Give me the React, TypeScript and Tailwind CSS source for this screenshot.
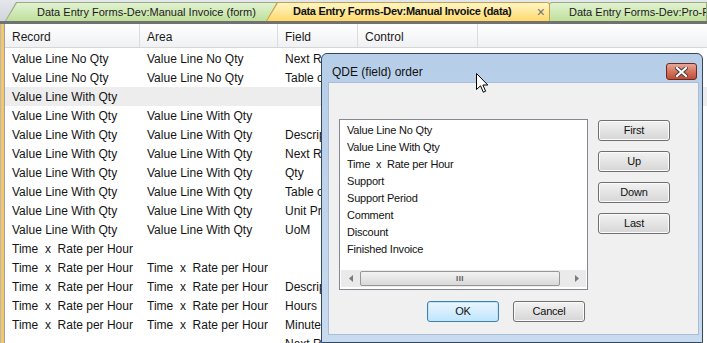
const font = "font-['Liberation_Sans',Arial,sans-serif]"

const VL = "Value Line No Qty"
const VW = "Value Line With Qty"
const TR = "Time  x  Rate per Hour"

const rows: [string, string, string][] = [
    [VL, VL, "Next Record"],
    [VL, VL, "Table of Values"],
    [VW, "", ""],
    [VW, VW, ""],
    [VW, VW, "Description"],
    [VW, VW, "Next Record"],
    [VW, VW, "Qty"],
    [VW, VW, "Table of Values"],
    [VW, VW, "Unit Price"],
    [VW, VW, "UoM"],
    [TR, "", ""],
    [TR, TR, ""],
    [TR, TR, "Description"],
    [TR, TR, "Hours"],
    [TR, TR, "Minutes"],
    ["", "", "Next Record"],
]

const order = [
    "Value Line No Qty",
    "Value Line With Qty",
    "Time  x  Rate per Hour",
    "Support",
    "Support Period",
    "Comment",
    "Discount",
    "Finished Invoice",
]

function Tabs() {
    return (
        <div className="flex h-[21px] pt-[2px] bg-gradient-to-b from-[#e4e7eb] to-[#d2d6dc]">
            <div className="relative z-10 shrink-0 ml-[5px] w-[276px] h-[19px] bg-[#9aae86] [clip-path:polygon(0_100%,11px_0,100%_0,100%_100%)]">
                <div className="absolute inset-[1px_0_0_1px] bg-gradient-to-b from-[#e2f2d2] to-[#bfe09a] [clip-path:polygon(0_100%,11px_0,100%_0,100%_100%)]" />
                <span className="relative block pl-[32px] pt-[2px] text-[11px] text-[#1a1a1a] whitespace-nowrap">
                    Data Entry Forms-Dev:Manual Invoice (form)
                </span>
            </div>
            <div className="relative z-30 shrink-0 ml-[-15px] w-[284px] h-[19px] bg-[#c9a14a] rounded-tr-[3px] [clip-path:polygon(0_100%,11px_0,100%_0,100%_100%)]">
                <div className="absolute inset-[1px_1px_0_1px] rounded-tr-[2px] bg-gradient-to-b from-[#fff6c4] to-[#ffd968] [clip-path:polygon(0_100%,11px_0,100%_0,100%_100%)]" />
                <div className="relative flex items-center h-full pl-[27px] pr-[5px]">
                    <span className="text-[11px] font-bold tracking-[-0.3px] text-[#111] whitespace-nowrap">
                        Data Entry Forms-Dev:Manual Invoice (data)
                    </span>
                    <span className="ml-auto text-[14px] leading-none text-[#707070]">×</span>
                </div>
            </div>
            <div className="relative z-20 ml-[-1px] min-w-0 flex-1 overflow-hidden h-[19px] rounded-tl-[3px] border border-b-0 border-[#9aae86] bg-gradient-to-b from-[#e2f2d2] to-[#bfe09a]">
                <span className="block pl-[19px] pt-[1px] text-[11px] text-[#1a1a1a] whitespace-nowrap">
                    Data Entry Forms-Dev:Pro-Forma Invoice (form)
                </span>
            </div>
        </div>
    )
}

function Grid() {
    return (
        <div className="flex flex-1 border-t-[3px] border-[#727272]">
            <div className="w-[5px] border-l border-[#b8b8b8] border-r border-r-[#a0a0a0] bg-[#f4c866]" />
            <div className="flex-1 bg-white">
                <div className="flex h-[24px] border-b border-[#d6d6d6] bg-gradient-to-b from-white to-[#f0f1f3] text-[12px] text-[#1a1a1a]">
                    <div className="w-[135px] pl-[7px] pt-[4px] border-r border-[#dcdde0]">Record</div>
                    <div className="w-[138px] pl-[7px] pt-[4px] border-r border-[#dcdde0]">Area</div>
                    <div className="w-[80px] pl-[7px] pt-[4px] border-r border-[#dcdde0]">Field</div>
                    <div className="w-[120px] pl-[7px] pt-[4px] border-r border-[#dcdde0]">Control</div>
                </div>
                <div className="pt-[1px]">
                    {rows.map((r, i) => (
                        <div key={i} className={`flex h-[19px] items-center text-[12px] text-[#141414] whitespace-pre ${i === 2 ? 'bg-[#ededed]' : ''}`}>
                            <div className="w-[135px] pl-[7px]">{r[0]}</div>
                            <div className="w-[138px] pl-[7px]">{r[1]}</div>
                            {/* the dialog hides the rest of this column */}
                            <div className="w-[43px] pl-[7px] overflow-hidden">{r[2]}</div>
                        </div>
                    ))}
                </div>
            </div>
        </div>
    )
}

function Btn({ label, primary }: { label: string, primary?: boolean }) {
    return (
        <div className={`flex h-[21px] w-[72px] items-center justify-center rounded-[3px] border text-[11px] tracking-[-0.2px] text-[#111] ${primary
            ? 'border-[#3c7fb1] bg-gradient-to-b from-[#eaf6fd] to-[#bee6fd] shadow-[inset_0_0_0_1px_#c4e5f6]'
            : 'border-[#707070] bg-gradient-to-b from-[#f2f2f2] to-[#d6d6d6] shadow-[inset_0_0_0_1px_#fbfbfb]'}`}>
            {label}
        </div>
    )
}

function Dialog() {
    return (
        <div className="absolute left-[321px] top-[53px] w-[382px] h-[290px] flex flex-col rounded-t-[6px] border border-[#33475e] bg-gradient-to-b from-[#b6cee8] to-[#c8dbef] pl-[6px] pr-[3px] pb-[7px]">
            <div className="flex h-[28px] items-start">
                <span className="pl-[4px] pt-[9px] text-[12px] text-[#111]">QDE (field) order</span>
                <div className="ml-auto mt-[9px] mr-[2px] flex h-[17px] w-[31px] items-center justify-center rounded-[3px] border border-[#6b2a20] bg-gradient-to-b from-[#e8a797] via-[#d47560] to-[#c24b33]">
                    <svg width="13" height="10" viewBox="0 0 13 10">
                        <path d="M2 1 L11 9 M11 1 L2 9" stroke="#3b3b3b" strokeWidth="4" strokeLinecap="square" />
                        <path d="M2 1 L11 9 M11 1 L2 9" stroke="#ffffff" strokeWidth="2.2" strokeLinecap="square" />
                    </svg>
                </div>
            </div>
            <div className="flex-1 flex flex-col border border-[#a9bed6] bg-[#f0f0f0]">
                <div className="flex pl-[10px] pt-[36px]">
                    <div className="flex h-[171px] w-[249px] flex-col border border-[#828790] bg-white">
                        <div className="flex-1 pl-[7px] pt-[2px] text-[11px] tracking-[-0.2px] text-[#111]">
                            {order.map(o => (
                                <div key={o} className="h-[17px] leading-[17px] whitespace-pre">{o}</div>
                            ))}
                        </div>
                        <div className="mx-[1px] mb-[2px] flex h-[17px] items-center bg-[#eaeaea]">
                            <div className="flex w-[19px] justify-center">
                                <svg width="4" height="7" viewBox="0 0 4 7"><path d="M4 0 L0 3.5 L4 7 Z" fill="#7a7a7a" /></svg>
                            </div>
                            <div className="flex h-[15px] w-[200px] items-center justify-center rounded-[2px] border border-[#979797] bg-gradient-to-b from-[#f3f3f3] to-[#d9d9d9]">
                                <span className="text-[8px] font-bold tracking-[0.5px] text-[#5a5a5a] leading-none">III</span>
                            </div>
                            <div className="ml-auto flex w-[19px] justify-center">
                                <svg width="4" height="7" viewBox="0 0 4 7"><path d="M0 0 L4 3.5 L0 7 Z" fill="#7a7a7a" /></svg>
                            </div>
                        </div>
                    </div>
                    <div className="ml-[10px] flex flex-col gap-[10px] pt-[1px]">
                        <Btn label="First" />
                        <Btn label="Up" />
                        <Btn label="Down" />
                        <Btn label="Last" />
                    </div>
                </div>
                <div className="flex gap-[14px] pl-[98px] pt-[11px]">
                    <Btn label="OK" primary />
                    <Btn label="Cancel" />
                </div>
            </div>
        </div>
    )
}

export default function App() {
    return (
        <div className={`relative flex flex-col w-[707px] h-[343px] overflow-hidden bg-white ${font}`}>
            <Tabs />
            <Grid />
            <Dialog />
            <svg className="absolute left-[476px] top-[73px]" width="13" height="21" viewBox="0 0 13 21">
                <path d="M0.5 0.5 L0.5 16.5 L4.5 12.8 L7.3 19.2 L9.6 18.2 L6.9 12 L11.8 12 Z" fill="#ffffff" stroke="#000000" strokeWidth="1" strokeLinejoin="miter" />
            </svg>
        </div>
    )
}
